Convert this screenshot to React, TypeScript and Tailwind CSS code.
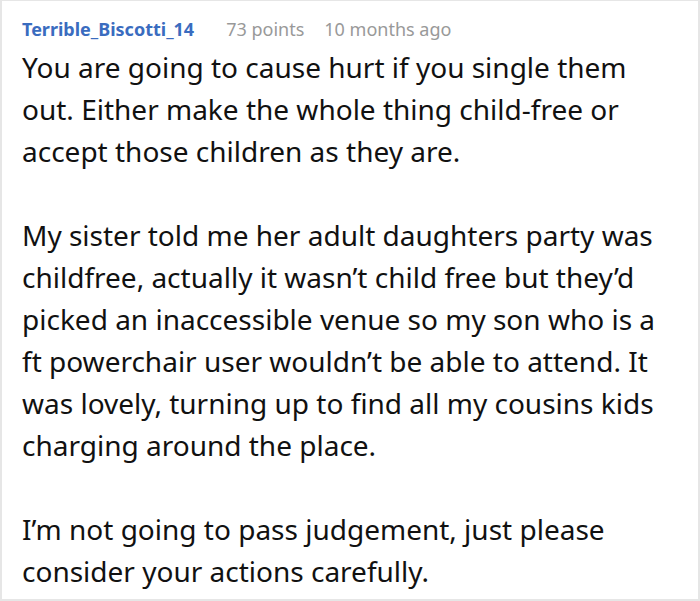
export default function App() {
  const paragraphs = [
    'You are going to cause hurt if you single them out. Either make the whole thing child-free or accept those children as they are.',
    'My sister told me her adult daughters party was childfree, actually it wasn\u2019t child free but they\u2019d picked an inaccessible venue so my son who is a ft powerchair user wouldn\u2019t be able to attend. It was lovely, turning up to find all my cousins kids charging around the place.',
    'I\u2019m not going to pass judgement, just please consider your actions carefully.',
  ]

  return (
    <div className="w-[700px] h-[601px] bg-white border-x-2 border-t border-b-2 border-[#e6e6e6] font-['Noto_Sans',sans-serif] overflow-hidden">
      <div className="pl-[20px] pr-[18px] pt-[15px]">
        <div className="flex items-baseline text-[18px] leading-[26px]">
          <span className="font-bold text-[#3a6cbf]">Terrible_Biscotti_14</span>
          <span className="ml-8 text-[#999999]">73 points</span>
          <span className="ml-5 text-[#999999]">10 months ago</span>
        </div>
        <div className="text-[28px] leading-[42px] text-[#111111] mt-[4px]">
          {paragraphs.map((p, i) => (
            <p key={i} className="mb-[42px]">{p}</p>
          ))}
        </div>
      </div>
    </div>
  )
}
